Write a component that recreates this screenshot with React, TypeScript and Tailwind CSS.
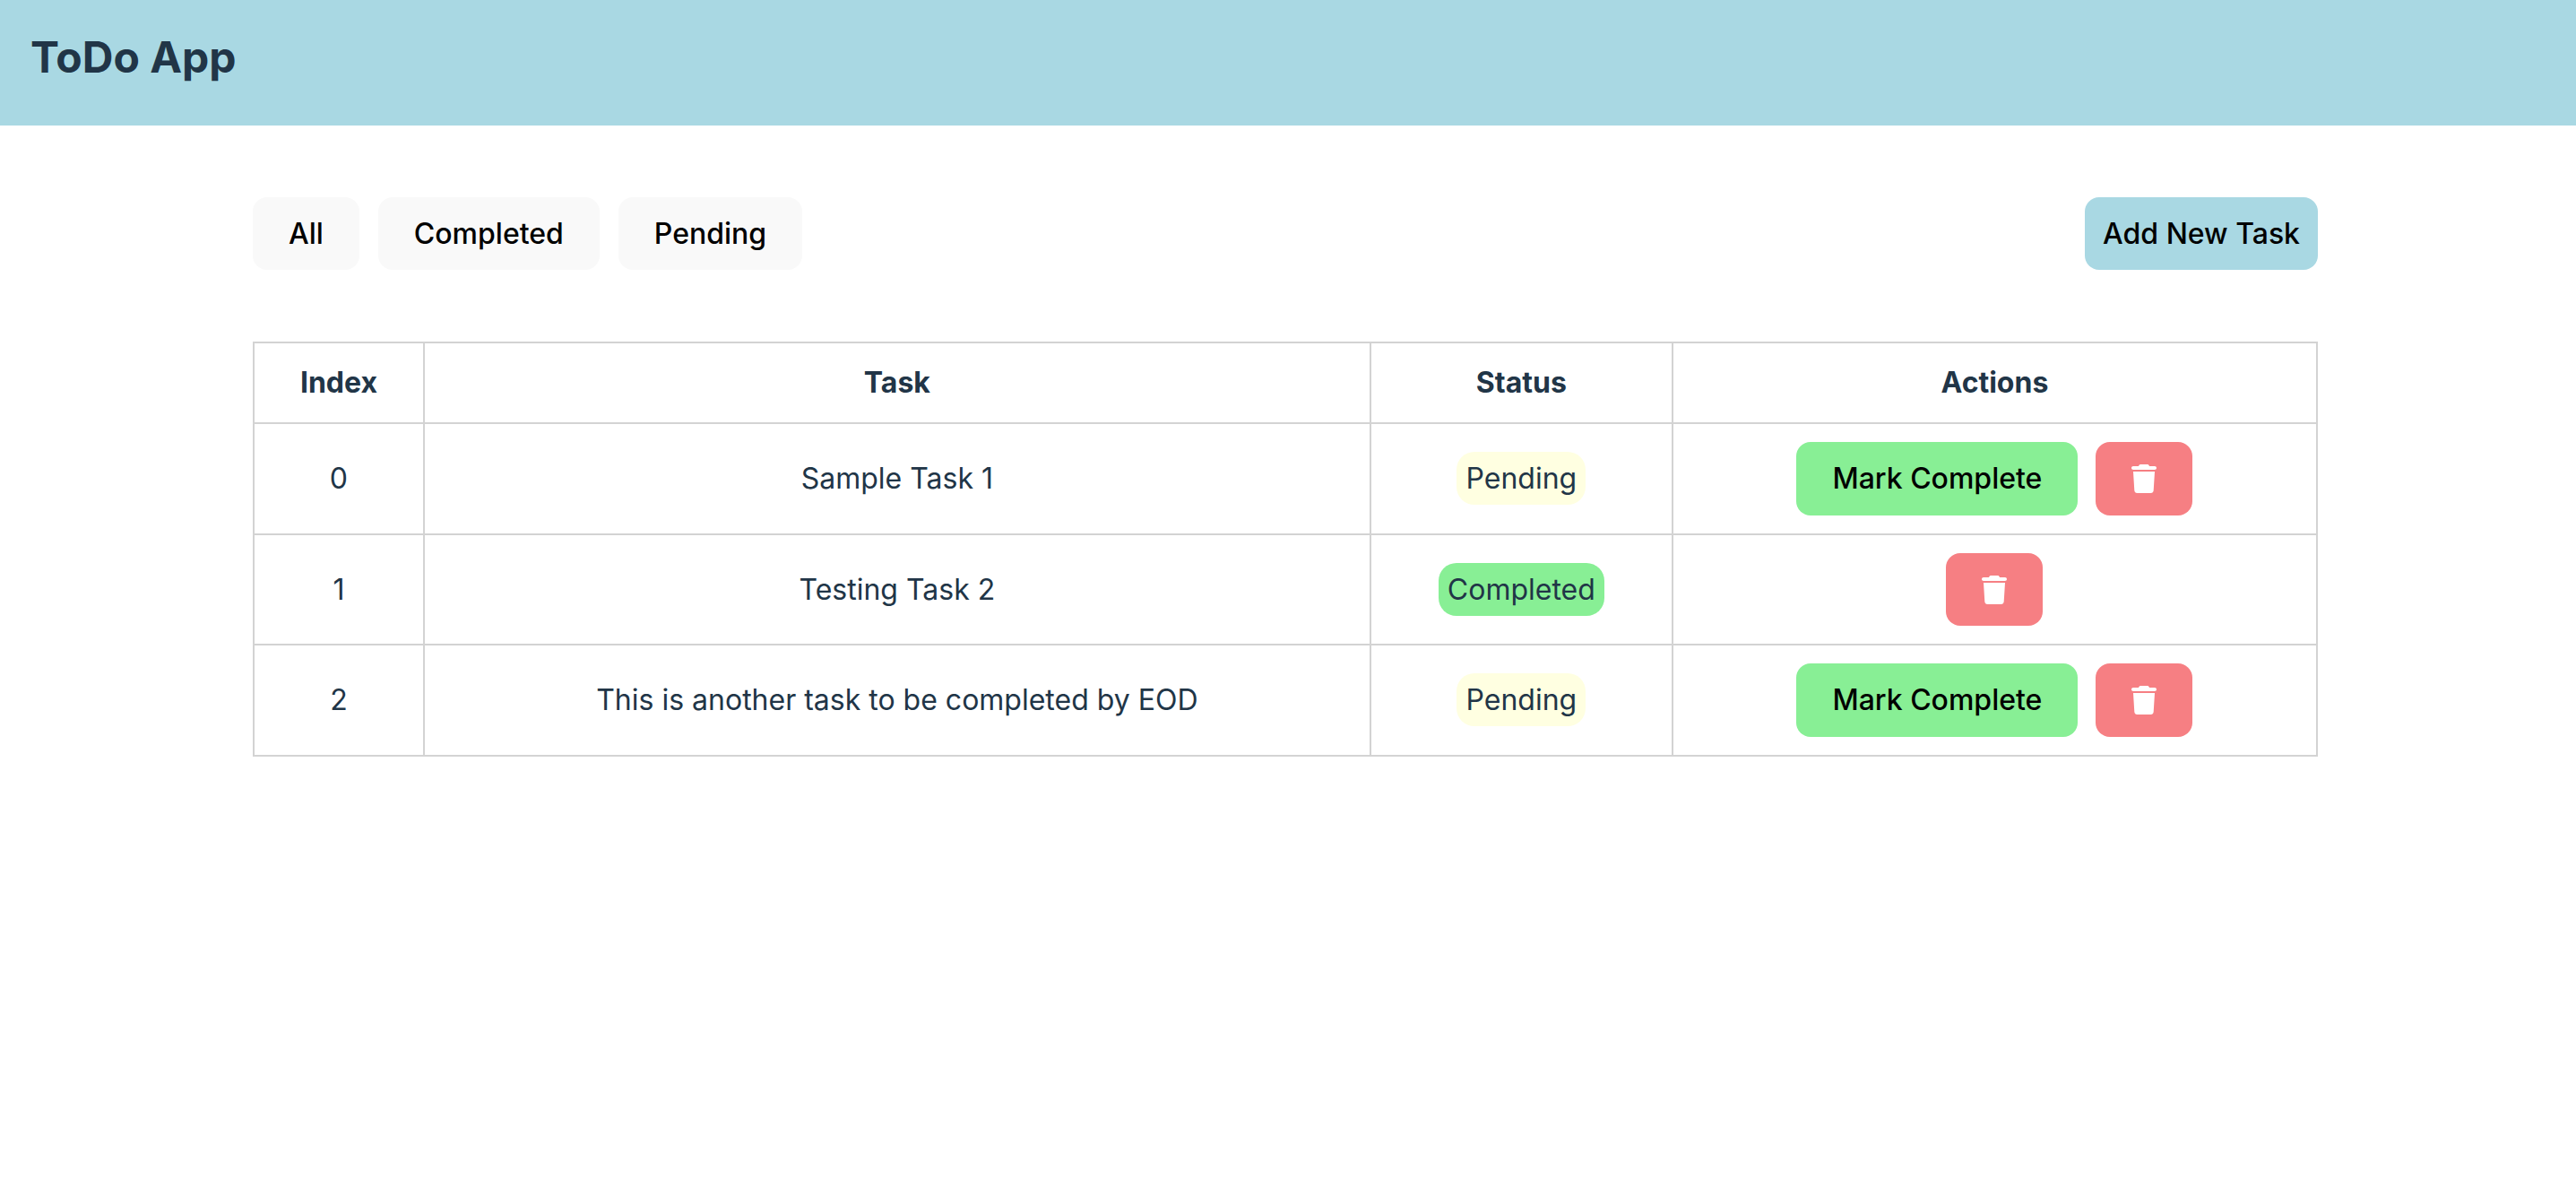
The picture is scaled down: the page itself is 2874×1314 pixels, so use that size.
import { useState } from "react";
import { FaTrash } from "react-icons/fa6";

type Status = "Pending" | "Completed";
type Filter = "All" | Status;
type Task = { id: number; title: string; status: Status };

const INITIAL_TASKS: Task[] = [
  { id: 0, title: "Sample Task 1", status: "Pending" },
  { id: 1, title: "Testing Task 2", status: "Completed" },
  { id: 2, title: "This is another task to be completed by EOD", status: "Pending" },
];

const FILTERS: Filter[] = ["All", "Completed", "Pending"];

const CELL = "border-2 border-[#d3d3d3] p-5";

function StatusBadge({ status }: { status: Status }) {
  const color = status === "Completed" ? "bg-[#88ef95]" : "bg-[#ffffe1]";
  return <span className={`rounded-[20px] p-[10px] ${color}`}>{status}</span>;
}

export default function App() {
  const [tasks, setTasks] = useState<Task[]>(INITIAL_TASKS);
  const [filter, setFilter] = useState<Filter>("All");
  const visible = tasks.filter((t) => filter === "All" || t.status === filter);

  const complete = (id: number) =>
    setTasks(tasks.map((t) => (t.id === id ? { ...t, status: "Completed" } : t)));
  const remove = (id: number) => setTasks(tasks.filter((t) => t.id !== id));

  return (
    <div className="min-h-screen bg-white font-['Inter',sans-serif] text-[32px] leading-[48px] text-[#213547]">
      <header className="bg-[#a9d8e3] px-[34px] pt-7 pb-10">
        <h1 className="text-[48px] leading-[72px] font-bold">ToDo App</h1>
      </header>

      <main className="flex flex-col gap-20 pt-20 pr-[288px] pl-[282px]">
        <div className="flex items-center justify-between">
          <div className="flex gap-[21px]">
            {FILTERS.map((f) => (
              <button
                key={f}
                type="button"
                onClick={() => setFilter(f)}
                className="rounded-2xl bg-[#f9f9f9] px-10 py-5 leading-[41px] font-medium text-black"
              >
                {f}
              </button>
            ))}
          </div>
          <button
            type="button"
            className="rounded-2xl bg-[#a9d8e3] px-5 py-5 leading-[41px] font-medium text-black"
          >
            Add New Task
          </button>
        </div>

        <table className="w-full table-fixed border-collapse text-center">
          <colgroup>
            <col className="w-[8.25%]" />
            <col className="w-[45.87%]" />
            <col className="w-[14.64%]" />
            <col className="w-[31.24%]" />
          </colgroup>
          <thead>
            <tr>
              {["Index", "Task", "Status", "Actions"].map((h) => (
                <th key={h} scope="col" className={`${CELL} font-bold`}>
                  {h}
                </th>
              ))}
            </tr>
          </thead>
          <tbody>
            {visible.map((task) => (
              <tr key={task.id}>
                <td className={CELL}>{task.id}</td>
                <td className={CELL}>{task.title}</td>
                <td className={CELL}>
                  <StatusBadge status={task.status} />
                </td>
                <td className={CELL}>
                  <div className="flex justify-center gap-5">
                    {task.status === "Pending" && (
                      <button
                        type="button"
                        onClick={() => complete(task.id)}
                        className="rounded-2xl bg-[#88ef95] px-10 py-5 leading-[42px] font-medium text-black"
                      >
                        Mark Complete
                      </button>
                    )}
                    <button
                      type="button"
                      aria-label={`Delete ${task.title}`}
                      onClick={() => remove(task.id)}
                      className="flex min-h-[81px] items-center rounded-2xl bg-[#f67f83] px-10 text-white"
                    >
                      <FaTrash className="h-8 w-7" aria-hidden="true" />
                    </button>
                  </div>
                </td>
              </tr>
            ))}
          </tbody>
        </table>
      </main>
    </div>
  );
}
